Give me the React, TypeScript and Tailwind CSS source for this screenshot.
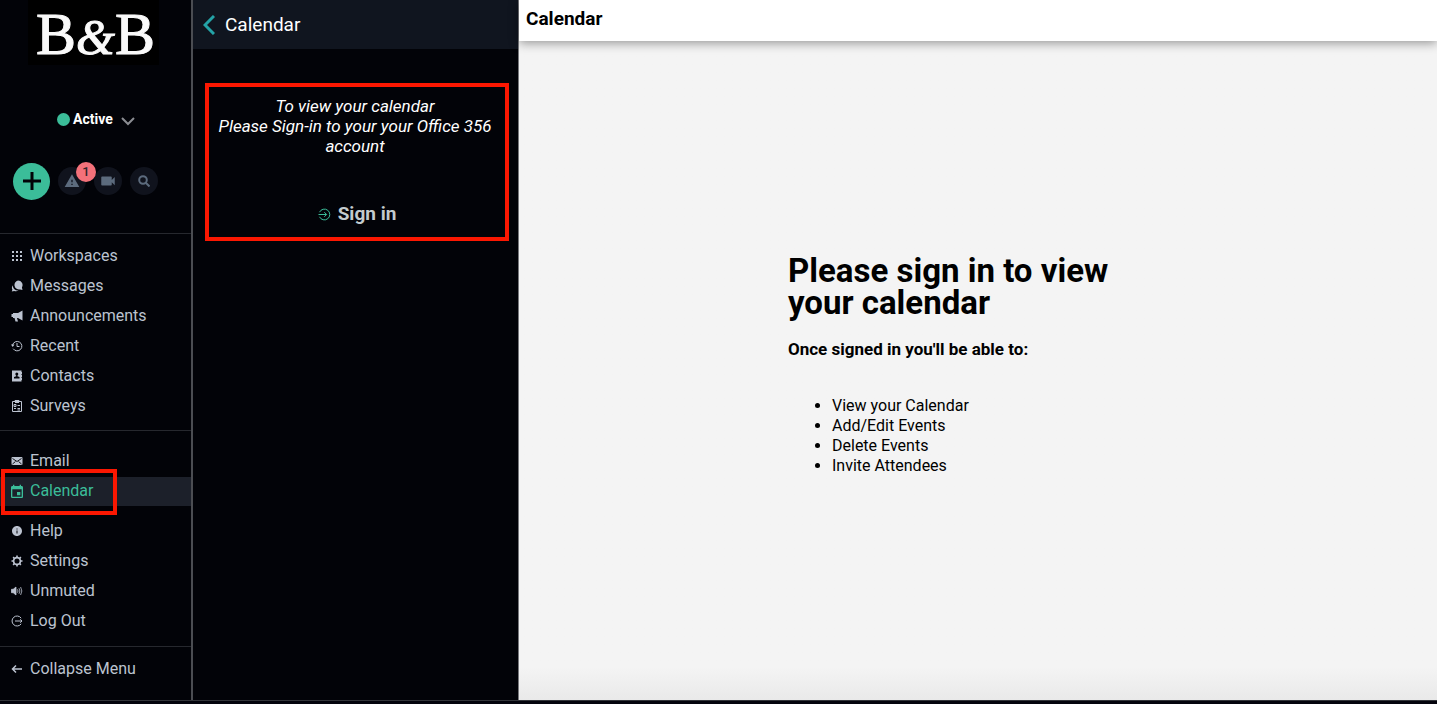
import type { ReactNode } from "react";
import { MdEvent, MdInfo, MdVideocam, MdWarning } from "react-icons/md";

interface NavItemProps {
  icon: ReactNode;
  label: string;
  active?: boolean;
}

function NavItem({ icon, label, active = false }: NavItemProps) {
  return (
    <li className="relative">
      <a
        href="#"
        className={
          active
            ? "flex h-[30px] items-center gap-[6px] border-t border-[#020308] bg-[#1c202a] pb-[2px] pl-[10px] text-[#3bbd99]"
            : "flex h-[30px] items-center gap-[6px] pl-[10px] text-[#bcc3d0]"
        }
      >
        <span className={active ? "flex w-[14px] justify-center pt-[2px]" : "flex w-[14px] justify-center"}>
          {icon}
        </span>
        {label}
      </a>
      {active && (
        <span className="pointer-events-none absolute -top-[7px] left-[1px] h-[46px] w-[116px] border-4 border-[#fb1701]" />
      )}
    </li>
  );
}

function DotsIcon() {
  return (
    <svg width="12" height="12" viewBox="0 0 12 12" fill="currentColor">
      {[1, 5, 9].map((y) =>
        [1, 5, 9].map((x) => <rect key={`${x}-${y}`} x={x} y={y} width="2" height="2" />)
      )}
    </svg>
  );
}

function MessagesIcon() {
  return (
    <svg width="12" height="12" viewBox="0 0 12 12" fill="currentColor">
      <path d="M7 .5a4.500 4.500 0 0 1 3.900 6.800l.6 2.700-2.400-.6A4.500 4.500 0 1 1 7 .5Z" />
      <path d="M1.700 5.200C.7 7 .7 8.500 1.400 9.500L.8 11.500l2.400-.5c1.400.6 3.200.4 4.300-.4C4.500 10.800 2 8.700 1.700 5.200Z" />
    </svg>
  );
}

function MegaphoneIcon() {
  return (
    <svg width="12" height="12" viewBox="0 0 12 12" fill="currentColor">
      <path d="M11.500.5v10L7 8H6l1 3.500H4.500L3.500 8H2V7H.5V4H2V3h5L11.500.5Z" />
    </svg>
  );
}

function RecentIcon() {
  return (
    <svg width="12" height="12" viewBox="0 0 12 12" fill="none" stroke="currentColor">
      <path d="M1.600 5A4.700 4.700 0 1 1 2.200 8.700M6 3v3.500h2.500" />
      <path d="M0 4.500h3.500L1.700 7 0 4.500Z" fill="currentColor" stroke="none" />
    </svg>
  );
}

function ContactsIcon() {
  return (
    <svg width="12" height="12" viewBox="0 0 12 12">
      <path fill="currentColor" d="M1 .5h9.500V2h.5v2h-.5v1h.5v2h-.5v1h.5v2h-.5v1.500H1z" />
      <circle cx="5.800" cy="4" r="1.500" fill="#020308" />
      <path fill="#020308" d="M5.200 5h1.200v1.200L8.500 7v1.500H3V7l2.200-.8z" />
    </svg>
  );
}

function SurveysIcon() {
  return (
    <svg width="12" height="14" viewBox="0 0 12 14" fill="none" stroke="currentColor">
      <path d="M1.500 2.500h9v10h-9zM4 2.500v-1h4v1" />
      <path d="M4 3.500h4M3 5.500h2v2H3zM6.500 6.500H9M3 9.500h2M6.500 9.500H9M6.500 11H9" />
    </svg>
  );
}

function EmailIcon() {
  return (
    <svg width="12" height="10" viewBox="0 0 12 10">
      <rect x=".5" y="1" width="11" height="8" rx="1" fill="currentColor" />
      <path d="m1.500 2.500 4.500 3 4.500-3M1.500 8l3-2.500M10.500 8l-3-2.500" fill="none" stroke="#020308" strokeWidth=".9" />
    </svg>
  );
}

function SettingsIcon() {
  return (
    <svg width="12" height="12" viewBox="0 0 12 12" fill="none" stroke="currentColor">
      <circle cx="6" cy="6" r="3.400" strokeWidth="1.700" />
      <path
        d="M6 .5v2M6 9.500v2M.5 6h2M9.500 6h2M2.100 2.100l1.300 1.300M8.600 8.600l1.300 1.300M2.100 9.900l1.300-1.300M8.600 3.400l1.300-1.300"
        strokeWidth="1.600"
      />
    </svg>
  );
}

function VolumeIcon() {
  return (
    <svg width="12" height="10" viewBox="0 0 12 10" fill="none" stroke="currentColor" strokeWidth=".8">
      <path d="M.5 3.300h1.700L5 1v8L2.200 6.700H.5z" fill="currentColor" />
      <path d="M6.500 3.300q1 1.700 0 3.400M8 2.200q1.800 2.800 0 5.600M9.600 1q2.500 4 0 8" />
    </svg>
  );
}

function LogOutIcon() {
  return (
    <svg width="12" height="12" viewBox="0 0 12 12" fill="none" stroke="currentColor">
      <path d="M10.200 3.200a5 5 0 1 0 0 5.600M4 6h7M9.200 4.300 11 6 9.200 7.700" />
    </svg>
  );
}

function ArrowLeftIcon() {
  return (
    <svg width="12" height="12" viewBox="0 0 12 12" fill="none" stroke="currentColor" strokeWidth="1.500">
      <path d="M11 6H1.500M5 2.500 1.500 6 5 9.500" />
    </svg>
  );
}

function SignInIcon() {
  return (
    <svg width="13" height="13" viewBox="0 0 13 13" fill="none" stroke="#3bbd99">
      <path d="M1.500 4.200a5.400 5.400 0 1 1 0 4.600M.5 6.500h8M6.300 4.200l2.300 2.300-2.300 2.300" />
    </svg>
  );
}

function Logo() {
  return (
    <svg
      width="131"
      height="70"
      viewBox="0 0 131 70"
      role="img"
      aria-label="B&B"
      className="ml-[28px] font-['Liberation_Serif',serif]"
    >
      <rect width="131" height="65" fill="#000" />
      <text x="8" y="54" fontSize="60" fill="#fafafa" stroke="#fafafa">
        B
        <tspan fontSize="50" fontStyle="italic">&amp;</tspan>
        B
      </text>
    </svg>
  );
}

function Sidebar() {
  return (
    <aside className="flex w-[193px] shrink-0 flex-col border-r-2 border-[#4b4d52] bg-[#020308]">
      <Logo />

      {/* Presence */}
      <button className="mt-[39px] ml-[57px] flex h-5 items-center self-start text-sm font-bold text-white">
        <span className="mr-[3px] size-[13px] rounded-full bg-[#3bbd99]" />
        Active
        <svg width="14" height="9" viewBox="0 0 14 9" fill="none" stroke="#8b8d92" strokeWidth="2" className="mt-1 ml-2">
          <path d="m1 1 6 6 6-6" />
        </svg>
      </button>

      {/* Quick actions */}
      <div className="mt-[33px] mb-[33px] flex h-[38px] items-center gap-2 pl-[13px] text-[#5c6b7d]">
        <button
          aria-label="Create"
          className="flex size-[37px] items-center justify-center rounded-full bg-[#3bbd99] text-[#020308]"
        >
          <svg width="18" height="18" viewBox="0 0 18 18" stroke="currentColor" strokeWidth="3">
            <path d="M9 0v18M0 9h18" />
          </svg>
        </button>
        <button aria-label="Alerts" className="relative flex size-7 items-center justify-center rounded-full bg-[#10131d]">
          <MdWarning size={16} />
          <span className="absolute -top-[5px] left-[18px] flex size-5 items-center justify-center rounded-full bg-[#f4717a] text-[13px] font-medium text-[#33252c]">
            1
          </span>
        </button>
        <button aria-label="Video" className="flex size-7 items-center justify-center rounded-full bg-[#10131d]">
          <MdVideocam size={18} />
        </button>
        <button aria-label="Search" className="flex size-7 items-center justify-center rounded-full bg-[#10131d]">
          <svg width="12" height="12" viewBox="0 0 12 12" fill="none" stroke="currentColor" strokeWidth="2">
            <circle cx="5" cy="5" r="3.800" />
            <path d="m7.500 7.500 4 4" />
          </svg>
        </button>
      </div>

      <nav>
        <ul className="border-t border-[#26282e] pt-[7px] pb-[9px]">
          <NavItem icon={<DotsIcon />} label="Workspaces" />
          <NavItem icon={<MessagesIcon />} label="Messages" />
          <NavItem icon={<MegaphoneIcon />} label="Announcements" />
          <NavItem icon={<RecentIcon />} label="Recent" />
          <NavItem icon={<ContactsIcon />} label="Contacts" />
          <NavItem icon={<SurveysIcon />} label="Surveys" />
        </ul>
        <ul className="border-t border-[#26282e] pt-[15px] pb-[10px]">
          <NavItem icon={<EmailIcon />} label="Email" />
          <NavItem icon={<MdEvent size={16} className="shrink-0" />} label="Calendar" active />
        </ul>
        <ul className="pb-[10px]">
          <NavItem icon={<MdInfo size={12} />} label="Help" />
          <NavItem icon={<SettingsIcon />} label="Settings" />
          <NavItem icon={<VolumeIcon />} label="Unmuted" />
          <NavItem icon={<LogOutIcon />} label="Log Out" />
        </ul>
        <ul className="border-t border-[#26282e] pt-[7px]">
          <NavItem icon={<ArrowLeftIcon />} label="Collapse Menu" />
        </ul>
      </nav>
    </aside>
  );
}

function CalendarPanel() {
  return (
    <section className="w-[326px] shrink-0 border-r border-[#77787c] bg-[#020308] text-white">
      <header className="flex h-[49px] items-center gap-[10px] bg-[#10151f] pl-[10px]">
        <button aria-label="Back">
          <svg width="12" height="20" viewBox="0 0 12 20" fill="none" stroke="#24a3a7" strokeWidth="3">
            <path d="m11 1-9 9 9 9" />
          </svg>
        </button>
        <h2 className="pt-[2px] text-[19px]">Calendar</h2>
      </header>

      <div className="mt-[34px] mr-[9px] ml-3 flex flex-col items-center border-4 border-[#fb1701] pt-[9px] pb-[10px]">
        <p className="pr-1 text-center text-[17px] leading-5 italic">
          To view your calendar
          <br />
          Please Sign-in to your your Office 356 account
        </p>
        <button className="mt-[45px] flex h-[26px] items-center gap-[7px] text-[19px] font-bold text-[#c3cbce]">
          <SignInIcon />
          Sign in
        </button>
      </div>
    </section>
  );
}

function MainView() {
  return (
    <main className="flex grow flex-col rounded-br-md bg-[#f4f4f4] text-black">
      <header className="z-10 h-[41px] bg-white pt-[5px] pl-[7px] shadow-[0_2px_10px_rgba(0,0,0,0.4)]">
        <h1 className="text-[19px] leading-7 font-bold">Calendar</h1>
      </header>
      <div className="flex grow flex-col items-center justify-center bg-linear-to-t from-[#e9e9e9] to-[#f4f4f4] to-5% pb-[10px]">
        <div className="w-[380px]">
          <h2 className="w-[340px] text-[33px] leading-8 font-bold">Please sign in to view your calendar</h2>
          <p className="mt-5 text-[17px] leading-5 font-bold">Once signed in you'll be able to:</p>
          <ul className="mt-[37px] list-disc pl-11 text-base leading-5">
            <li>View your Calendar</li>
            <li>Add/Edit Events</li>
            <li>Delete Events</li>
            <li>Invite Attendees</li>
          </ul>
        </div>
      </div>
    </main>
  );
}

export default function App() {
  return (
    <div className="flex min-h-screen flex-col bg-[#04040c] pb-[3px] font-['Roboto',sans-serif]">
      <div className="flex grow border-b border-[#33353a]">
        <Sidebar />
        <CalendarPanel />
        <MainView />
      </div>
    </div>
  );
}
